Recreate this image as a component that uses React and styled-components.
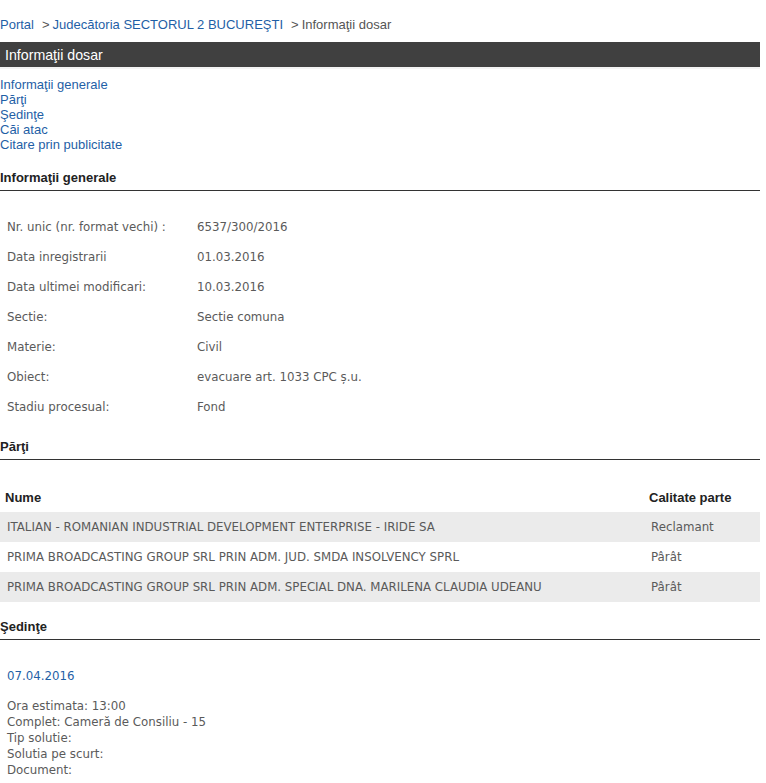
import React from "react";
import styled, { createGlobalStyle } from "styled-components";

const GlobalStyle = createGlobalStyle`
  body {
    margin: 0;
    background: #fff;
    font-family: "Liberation Sans", Arial, sans-serif;
  }
`;

const BLUE = "#1f5fa6";
const GREY_TEXT = "#5a5a5a";
const BODY_FONT = `"DejaVu Sans", Tahoma, sans-serif`;

const Page = styled.div`
  width: 760px;
  padding-top: 16px;
`;

const Breadcrumb = styled.div`
  display: flex;
  align-items: center;
  font-size: 13px;
  line-height: 17px;
  white-space: nowrap;
`;

const Crumb = styled.a`
  color: ${(p) => (p.$current ? "#555" : BLUE)};
  text-decoration: none;
`;

const Sep = styled.span`
  color: #555;
  margin: 0 3px 0 8px;
`;

const TitleBar = styled.div`
  margin-top: 9px;
  height: 25px;
  line-height: 26px;
  background: #404040;
  color: #fff;
  font-size: 14.2px;
  padding-left: 5px;
  border-bottom: 2px solid #f3f3f3;
`;

const Nav = styled.nav`
  display: flex;
  flex-direction: column;
  margin-top: 8px;
`;

const NavLink = styled.a`
  color: ${BLUE};
  font-size: 13px;
  line-height: 15px;
  text-decoration: none;
`;

const SectionTitle = styled.h2`
  margin: ${(p) => p.$top}px 0 0;
  padding-bottom: 4px;
  font-size: 13px;
  line-height: 16px;
  font-weight: bold;
  color: #222;
  border-bottom: 1px solid #333;
`;

const InfoList = styled.div`
  margin-top: 21px;
  display: flex;
  flex-direction: column;
`;

const InfoRow = styled.div`
  display: grid;
  grid-template-columns: 190px 1fr;
  height: 30px;
  align-items: center;
  padding-left: 7px;
  font-family: ${BODY_FONT};
  font-size: 11.8px;
  color: ${GREY_TEXT};
`;

const Table = styled.div`
  margin-top: 22px;
  display: flex;
  flex-direction: column;
`;

const TableRow = styled.div`
  display: grid;
  grid-template-columns: 1fr 111px;
  height: 30px;
  align-items: center;
  background: ${(p) => (p.$shaded ? "#ebebeb" : "transparent")};
`;

const HeadCell = styled.div`
  font-size: 13px;
  font-weight: bold;
  color: #222;
  padding-left: ${(p) => (p.$first ? 5 : 0)}px;
`;

const Cell = styled.div`
  font-family: ${BODY_FONT};
  font-size: 11.8px;
  color: ${GREY_TEXT};
  padding-left: ${(p) => (p.$first ? 7 : 2)}px;
  white-space: nowrap;
`;

const Hearing = styled.div`
  margin-top: 28px;
  padding-left: 7px;
  font-family: ${BODY_FONT};
  font-size: 11.8px;
`;

const HearingDate = styled.a`
  display: block;
  color: ${BLUE};
  line-height: 16px;
  text-decoration: none;
`;

const HearingDetails = styled.div`
  margin-top: 14px;
  color: ${GREY_TEXT};
  line-height: 16px;
`;

const info = [
  ["Nr. unic (nr. format vechi) :", "6537/300/2016"],
  ["Data inregistrarii", "01.03.2016"],
  ["Data ultimei modificari:", "10.03.2016"],
  ["Sectie:", "Sectie comuna"],
  ["Materie:", "Civil"],
  ["Obiect:", "evacuare art. 1033 CPC ș.u."],
  ["Stadiu procesual:", "Fond"],
];

const parties = [
  ["ITALIAN - ROMANIAN INDUSTRIAL DEVELOPMENT ENTERPRISE - IRIDE SA", "Reclamant"],
  ["PRIMA BROADCASTING GROUP SRL PRIN ADM. JUD. SMDA INSOLVENCY SPRL", "Pârât"],
  ["PRIMA BROADCASTING GROUP SRL PRIN ADM. SPECIAL DNA. MARILENA CLAUDIA UDEANU", "Pârât"],
];

const details = [
  "Ora estimata: 13:00",
  "Complet: Cameră de Consiliu - 15",
  "Tip solutie:",
  "Solutia pe scurt:",
  "Document:",
];

export default function App() {
  return (
    <>
      <GlobalStyle />
      <Page>
        <Breadcrumb>
          <Crumb href="#">Portal</Crumb>
          <Sep>&gt;</Sep>
          <Crumb href="#">Judecătoria SECTORUL 2 BUCUREŞTI</Crumb>
          <Sep>&gt;</Sep>
          <Crumb $current>Informaţii dosar</Crumb>
        </Breadcrumb>
        <TitleBar>Informaţii dosar</TitleBar>
        <Nav>
          <NavLink href="#">Informaţii generale</NavLink>
          <NavLink href="#">Părţi</NavLink>
          <NavLink href="#">Şedinţe</NavLink>
          <NavLink href="#">Căi atac</NavLink>
          <NavLink href="#">Citare prin publicitate</NavLink>
        </Nav>

        <SectionTitle $top={18}>Informaţii generale</SectionTitle>
        <InfoList>
          {info.map(([label, value]) => (
            <InfoRow key={label}>
              <span>{label}</span>
              <span>{value}</span>
            </InfoRow>
          ))}
        </InfoList>

        <SectionTitle $top={17}>Părţi</SectionTitle>
        <Table>
          <TableRow>
            <HeadCell $first>Nume</HeadCell>
            <HeadCell>Calitate parte</HeadCell>
          </TableRow>
          {parties.map(([name, role], i) => (
            <TableRow key={name} $shaded={i % 2 === 0}>
              <Cell $first>{name}</Cell>
              <Cell>{role}</Cell>
            </TableRow>
          ))}
        </Table>

        <SectionTitle $top={17}>Şedinţe</SectionTitle>
        <Hearing>
          <HearingDate href="#">07.04.2016</HearingDate>
          <HearingDetails>
            {details.map((d) => (
              <div key={d}>{d}</div>
            ))}
          </HearingDetails>
        </Hearing>
      </Page>
    </>
  );
}
